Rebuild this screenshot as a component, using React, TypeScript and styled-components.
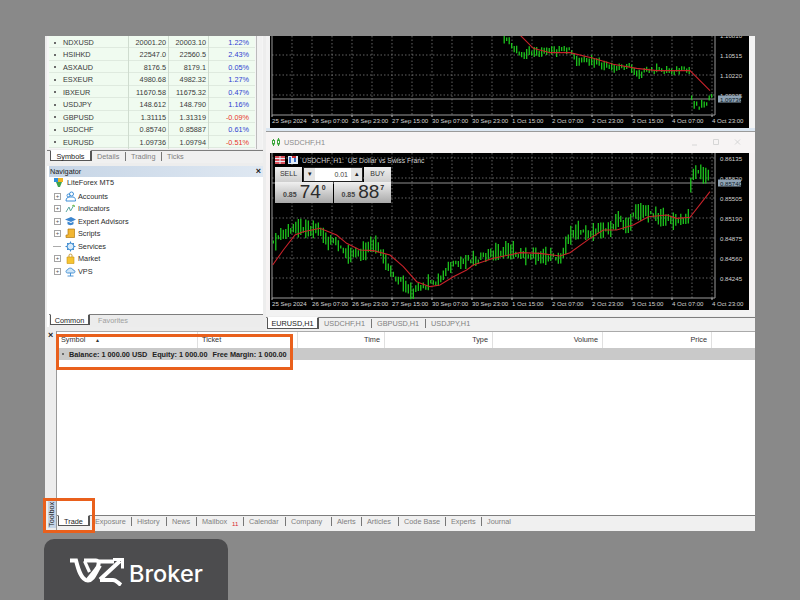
import React from "react";
import styled, { createGlobalStyle } from "styled-components";

const GlobalStyle = createGlobalStyle`
  html, body { margin: 0; padding: 0; background: #898989; }
  * { box-sizing: border-box; }
`;

type Pt = [number, number];

const marketRows = [
  { symbol: "NDXUSD", bid: "20001.20", ask: "20003.10", change: "1.22%" },
  { symbol: "HSIHKD", bid: "22547.0", ask: "22560.5", change: "2.43%" },
  { symbol: "ASXAUD", bid: "8176.5", ask: "8179.1", change: "0.05%" },
  { symbol: "ESXEUR", bid: "4980.68", ask: "4982.32", change: "1.27%" },
  { symbol: "IBXEUR", bid: "11670.58", ask: "11675.32", change: "0.47%" },
  { symbol: "USDJPY", bid: "148.612", ask: "148.790", change: "1.16%" },
  { symbol: "GBPUSD", bid: "1.31115", ask: "1.31319", change: "-0.09%" },
  { symbol: "USDCHF", bid: "0.85740", ask: "0.85887", change: "0.61%" },
  { symbol: "EURUSD", bid: "1.09736", ask: "1.09794", change: "-0.51%" },
];

const timeLabels = [
  "25 Sep 2024", "26 Sep 07:00", "26 Sep 23:00", "27 Sep 15:00", "30 Sep 07:00", "30 Sep 23:00",
  "1 Oct 15:00", "2 Oct 07:00", "2 Oct 23:00", "3 Oct 15:00", "4 Oct 07:00", "4 Oct 23:00",
];

// anchors are page coordinates read off the screenshot
const z3 = (x: number, y: number): Pt => [260 + x / 3, 130 + y / 3];
const z4 = (x: number, y: number): Pt => [520 + x / 3, 130 + y / 3];
const z5 = (x: number, y: number): Pt => [260 + x / 3, 30 + y / 3];

const lowerPrice: Pt[] = [
  z3(40, 335), z3(70, 310), z3(100, 300), z3(130, 295), z3(175, 300), z3(200, 335), z3(230, 340), z3(260, 375),
  z3(300, 375), z3(345, 340), z3(370, 385), z3(395, 430), z3(430, 460), z3(460, 485), z3(500, 465), z3(540, 450),
  z3(560, 415), z3(600, 400), z3(625, 385), z3(650, 390), z3(700, 370), z3(750, 360), z4(0, 375), z4(60, 375),
  z4(120, 385), z4(140, 340), z4(160, 305), z4(210, 310), z4(250, 295), z4(280, 295), z4(295, 260), z4(320, 290),
  z4(355, 240), z4(400, 255), z4(470, 275), z4(505, 262), z4(515, 125), z4(570, 135),
];
const lowerMa: Pt[] = [
  z3(38, 405), z3(70, 360), z3(105, 315), z3(130, 305), z3(180, 295), z3(230, 315), z3(260, 340), z3(300, 360),
  z3(340, 362), z3(390, 375), z3(430, 410), z3(470, 455), z3(510, 470), z3(540, 465), z3(580, 440), z3(620, 420),
  z3(640, 405), z3(700, 385), z3(780, 368), z4(60, 370), z4(120, 378), z4(150, 368), z4(210, 325), z4(250, 300),
  z4(290, 300), z4(340, 285), z4(385, 260), z4(440, 255), z4(470, 265), z4(510, 262), z4(570, 185),
];
const upperPrice: Pt[] = [
  z5(725, 12), z5(760, 50), z5(790, 85), z5(810, 65), z5(870, 67), z5(930, 60), z5(950, 95), z5(1000, 95),
  z5(1060, 118), z5(1100, 105), z5(1135, 130), z5(1180, 120), z5(1288, 122), z5(1296, 215), z5(1320, 228), z5(1355, 205),
];
const upperMa: Pt[] = [
  z5(780, 15), z5(820, 55), z5(870, 68), z5(930, 68), z5(1000, 85), z5(1060, 103), z5(1130, 115), z5(1190, 122),
  z5(1290, 122), z5(1350, 182),
];

const priceAt = (pts: Pt[], x: number) => {
  for (let i = 1; i < pts.length; i++) {
    if (x <= pts[i][0]) {
      const [x0, y0] = pts[i - 1];
      const [x1, y1] = pts[i];
      return y0 + ((y1 - y0) * (x - x0)) / (x1 - x0 || 1);
    }
  }
  return pts[pts.length - 1][1];
};

const jitter = (n: number) => {
  const v = Math.sin(n * 12.9898) * 43758.5453;
  return v - Math.floor(v);
};

const candlePath = (pts: Pt[], top: number, spread: number) => {
  let d = "";
  const endX = pts[pts.length - 1][0];
  for (let x = pts[0][0], i = 0; x <= endX; x += 2.5, i++) {
    const c = priceAt(pts, x);
    const h = 3 + jitter(i) * spread;
    const offset = (jitter(i + 40) - 0.5) * 5;
    const y0 = Math.max(top, c - h / 2 + offset);
    d += `M${x.toFixed(1)} ${y0.toFixed(1)}V${(c + h / 2 + offset).toFixed(1)}`;
  }
  return d;
};

interface ChartProps {
  top: number;
  height: number;
  plotBottom: number;
  priceLine: number;
  lastLabel: string;
  spread: number;
  levels: { y: number; label: string }[];
  price: Pt[];
  ma: Pt[];
}

const ChartDrawing: React.FC<ChartProps> = ({ top, height, plotBottom, priceLine, lastLabel, spread, levels, price, ma }) => {
  const gridX = Array.from({ length: 22 }, (_, i) => 292 + i * 20);
  const labelY = plotBottom + 8;
  return (
    <svg width="479" height={height} viewBox={`270 ${top} 479 ${height}`} style={{ display: "block" }}>
      <rect x="270" y={top} width="479" height={height} fill="#000" />
      <g stroke="#8d8d8d" strokeWidth="0.7" strokeDasharray="1.5 2">
        {gridX.map((x) => (
          <line key={x} x1={x} y1={top} x2={x} y2={plotBottom} />
        ))}
        {levels.map((l) => (
          <line key={l.y} x1="272" y1={l.y} x2="715" y2={l.y} />
        ))}
      </g>
      <path d={`M272 ${top}V${plotBottom}H715V${top}`} fill="none" stroke="#9b9b9b" strokeWidth="1" />
      <line x1="272" y1={priceLine} x2="715" y2={priceLine} stroke="#8f8f8f" strokeWidth="1" />
      <path d={candlePath(price, top, spread)} stroke="#1fd41f" strokeWidth="1.2" fill="none" />
      <polyline points={ma.map((p) => p.join(",")).join(" ")} fill="none" stroke="#c8222a" strokeWidth="1.1" />
      <g fill="#d4d4d4" fontFamily="'Liberation Sans', sans-serif" fontSize="6.1">
        {levels.map((l) => (
          <text key={l.label} x="720" y={l.y + 2.5}>{l.label}</text>
        ))}
        {timeLabels.map((t, i) => (
          <text key={t} x={272 + i * 40} y={labelY}>{t}</text>
        ))}
      </g>
      {timeLabels.map((t, i) => (
        <line key={t} x1={272 + i * 40} y1={plotBottom} x2={272 + i * 40} y2={plotBottom + 2} stroke="#bbb" />
      ))}
      <rect x="718" y={priceLine - 3.5} width="23" height="7" fill="#8fa3b5" />
      <text x="720" y={priceLine + 2.5} fill="#0c1a28" fontFamily="'Liberation Sans', sans-serif" fontSize="6.1">
        {lastLabel}
      </text>
    </svg>
  );
};

const toolboxTabs = [
  { label: "Exposure", width: 42 },
  { label: "History", width: 35 },
  { label: "News", width: 30 },
  { label: "Mailbox", width: 47, badge: "11" },
  { label: "Calendar", width: 42 },
  { label: "Company", width: 46 },
  { label: "Alerts", width: 30 },
  { label: "Articles", width: 37 },
  { label: "Code Base", width: 47 },
  { label: "Experts", width: 36 },
  { label: "Journal", width: 40 },
];

const navItems = [
  { label: "Accounts", kind: "accounts", expand: true },
  { label: "Indicators", kind: "indicators", expand: true },
  { label: "Expert Advisors", kind: "experts", expand: true },
  { label: "Scripts", kind: "scripts", expand: true },
  { label: "Services", kind: "services", expand: false },
  { label: "Market", kind: "market", expand: true },
  { label: "VPS", kind: "vps", expand: true },
];

const NavIcon: React.FC<{ kind: string }> = ({ kind }) => {
  const box = { width: 11, height: 11, viewBox: "0 0 11 11", style: { flex: "none" } as React.CSSProperties };
  switch (kind) {
    case "accounts":
      return (
        <svg {...box} fill="none" stroke="#3f8fd8" strokeWidth="1">
          <circle cx="6.5" cy="3" r="2" />
          <path d="M1 10c0-3 2-4 3-4h4c2 0 2.500 2 2.500 4z" />
          <circle cx="3.500" cy="4.500" r="1.500" />
        </svg>
      );
    case "indicators":
      return (
        <svg {...box} fill="none" strokeWidth="1">
          <path d="M1 9L4 4l1.500 4L9 2" stroke="#5aa7a0" />
          <path d="M7 3l2-1 .5 2" stroke="#7cc24f" />
        </svg>
      );
    case "experts":
      return (
        <svg {...box} fill="#3c86cf">
          <path d="M0 3.500L6 1l5 2.500L6 6z" />
          <path d="M2.500 5.500v2.500c1 1.500 5 1.500 6 0V5.500L6 7z" />
        </svg>
      );
    case "scripts":
      return (
        <svg {...box}>
          <path d="M3 1h6.500v8.500H1V7h2z" fill="#f2b632" stroke="#b27a12" strokeWidth="0.7" />
        </svg>
      );
    case "services":
      return (
        <svg {...box} fill="#d8ebfa" stroke="#3d8bd0" strokeWidth="1">
          <circle cx="5.500" cy="5.500" r="3.500" />
          <path d="M5.500 0.500v2M5.500 8.500v2M0.500 5.500h2M8.500 5.500h2M2 2l1.500 1.500M7.500 7.500L9 9M9 2L7.500 3.500M3.500 7.500L2 9" />
        </svg>
      );
    case "market":
      return (
        <svg {...box}>
          <path d="M2 4h7v6.500H2z" fill="#f6c431" stroke="#c99314" strokeWidth="0.6" />
          <path d="M4 4V2c0-1.200 3-1.200 3 0v2" fill="none" stroke="#b88712" strokeWidth="0.8" />
        </svg>
      );
    default:
      return (
        <svg {...box} fill="#cfe6f8" stroke="#3d8bd0" strokeWidth="0.9">
          <path d="M2.500 7C0.500 7 .5 4 2.500 4 3 1.500 7.500 1.500 8 4c2.500 0 2.500 3 .5 3z" />
          <path d="M5.500 7v3M2.500 10h6" fill="none" />
        </svg>
      );
  }
};

export default function App() {
  return (
    <Page>
      <GlobalStyle />
      <Terminal>
        <UpperArea>
          <LeftColumn>
            <MarketWatch>
              <MarketRows>
                {marketRows.map((row) => (
                  <MarketRow key={row.symbol}>
                    <SymbolCell>
                      <Dot />
                      {row.symbol}
                    </SymbolCell>
                    <PriceCell>{row.bid}</PriceCell>
                    <PriceCell>{row.ask}</PriceCell>
                    <ChangeCell $negative={row.change.startsWith("-")}>{row.change}</ChangeCell>
                  </MarketRow>
                ))}
              </MarketRows>
              <Scrollbar />
            </MarketWatch>
            <TabStrip $height={13} $pad={3}>
              <ActiveTab $width={42}>Symbols</ActiveTab>
              <PlainTab $width={34}>Details</PlainTab>
              <PlainTab $width={36}>Trading</PlainTab>
              <PlainTab $width={30} $last>Ticks</PlainTab>
            </TabStrip>
            <Navigator>
              <NavTitle>
                <span>Navigator</span>
                <CloseMark>×</CloseMark>
              </NavTitle>
              <Tree>
                <TreeRoot>
                  <svg width="11" height="11" viewBox="0 0 11 11">
                    <path d="M1 1h4v4H1z" fill="#2f8fdb" />
                    <path d="M5 1h5v4H5z" fill="#f0b323" />
                    <path d="M3 5h6l-2 5H5z" fill="#3fa34d" />
                  </svg>
                  LiteForex MT5
                </TreeRoot>
                {navItems.map((item) => (
                  <TreeRow key={item.label}>
                    {item.expand ? <Expander>+</Expander> : <TreeDash />}
                    <NavIcon kind={item.kind} />
                    <TreeLabel>{item.label}</TreeLabel>
                  </TreeRow>
                ))}
              </Tree>
              <NavTabs>
                <ActiveTab $width={40}>Common</ActiveTab>
                <FadedTab>Favorites</FadedTab>
              </NavTabs>
            </Navigator>
          </LeftColumn>
          <ChartColumn>
            <ChartPane>
              <ChartDrawing
                top={36}
                height={92}
                plotBottom={115}
                priceLine={99}
                lastLabel="1.09736"
                spread={7}
                levels={[
                  { y: 35, label: "1.10810" },
                  { y: 55, label: "1.10515" },
                  { y: 75, label: "1.10220" },
                  { y: 95, label: "1.09925" },
                ]}
                price={upperPrice}
                ma={upperMa}
              />
            </ChartPane>
            <PaneDivider />
            <ChartWindow>
              <ChartTitleBar>
                <svg width="8" height="9" viewBox="0 0 8 9" fill="none" stroke="#3ea63e" strokeWidth="1">
                  <path d="M1.500 1v7M6.500 0v8" />
                  <rect x="0.500" y="2.500" width="2" height="3.500" fill="#fff" />
                  <rect x="5.500" y="2" width="2" height="4" fill="#fff" />
                </svg>
                <ChartTitleText>USDCHF,H1</ChartTitleText>
                <WindowButtons>
                  <svg width="60" height="9" viewBox="0 0 60 9" fill="none" stroke="#d6d6d6">
                    <path d="M6 7h5M27.500 1.500h5v5h-5zM49 1.500l5 5M54 1.500l-5 5" />
                  </svg>
                </WindowButtons>
              </ChartTitleBar>
              <ChartHolder>
                <ChartDrawing
                  top={153}
                  height={157}
                  plotBottom={298}
                  priceLine={183}
                  lastLabel="0.85740"
                  spread={16}
                  levels={[
                    { y: 158, label: "0.86135" },
                    { y: 178, label: "0.85820" },
                    { y: 198, label: "0.85505" },
                    { y: 218, label: "0.85190" },
                    { y: 238, label: "0.84875" },
                    { y: 258, label: "0.84560" },
                    { y: 278, label: "0.84245" },
                  ]}
                  price={lowerPrice}
                  ma={lowerMa}
                />
                <ChartCaption>
                  <svg width="24" height="8" viewBox="0 0 24 8">
                    <rect x="0" y="0" width="10" height="8" fill="#d9505a" />
                    <path d="M0 2.500h10M0 5.500h10M5 0v8" stroke="#e6e9f5" strokeWidth="1" />
                    <rect x="13" y="0" width="10" height="8" fill="#e4edf7" />
                    <path d="M15 1v6M20 1v5" stroke="#3d70c8" strokeWidth="2" />
                    <path d="M17 0h4v2h-4z" fill="#cc2c36" />
                  </svg>
                  <span>USDCHF, H1:&nbsp; US Dollar vs Swiss Franc</span>
                </ChartCaption>
                <TradePanel>
                  <TradeTop>
                    <TradeButton>SELL</TradeButton>
                    <Stepper>
                      <StepArrow>▾</StepArrow>
                      <StepValue>0.01</StepValue>
                      <StepArrow>▴</StepArrow>
                    </Stepper>
                    <TradeButton>BUY</TradeButton>
                  </TradeTop>
                  <QuoteRow>
                    <Quote>
                      <QuoteSmall>0.85</QuoteSmall>
                      <QuoteBig>74</QuoteBig>
                      <QuoteSup>0</QuoteSup>
                    </Quote>
                    <Quote>
                      <QuoteSmall>0.85</QuoteSmall>
                      <QuoteBig>88</QuoteBig>
                      <QuoteSup>7</QuoteSup>
                    </Quote>
                  </QuoteRow>
                </TradePanel>
              </ChartHolder>
              <ChartFooter />
            </ChartWindow>
            <TabStrip $height={14} $pad={1}>
              <ActiveTab $width={52}>EURUSD,H1</ActiveTab>
              <PlainTab $width={53}>USDCHF,H1</PlainTab>
              <PlainTab $width={54}>GBPUSD,H1</PlainTab>
              <PlainTab $width={50} $last>USDJPY,H1</PlainTab>
            </TabStrip>
          </ChartColumn>
        </UpperArea>
        <Toolbox>
          <ToolboxRail>
            <CloseMark>×</CloseMark>
            <RailLabel>Toolbox</RailLabel>
          </ToolboxRail>
          <ToolboxBody>
            <ToolboxHeader>
              <HeadCell $width={141}>Symbol <SortMark>▴</SortMark></HeadCell>
              <HeadCell $width={100}>Ticket</HeadCell>
              <HeadCell $width={87}>Time</HeadCell>
              <HeadCell $width={108}>Type</HeadCell>
              <HeadCell $width={110}>Volume</HeadCell>
              <HeadCell $width={109}>Price</HeadCell>
            </ToolboxHeader>
            <BalanceRow>
              <Dot />
              <span>Balance: 1 000.00 USD</span>
              <span>Equity: 1 000.00</span>
              <span>Free Margin: 1 000.00</span>
            </BalanceRow>
            <EmptyArea />
            <ToolboxTabs>
              <ActiveTab $width={32}>Trade</ActiveTab>
              {toolboxTabs.map((tab, i) => (
                <PlainTab key={tab.label} $width={tab.width} $last={i === toolboxTabs.length - 1}>
                  {tab.label}
                  {tab.badge && <MailBadge>{tab.badge}</MailBadge>}
                </PlainTab>
              ))}
            </ToolboxTabs>
          </ToolboxBody>
        </Toolbox>
        <HighlightTable />
        <HighlightTab />
      </Terminal>
      <BrokerBadge>
        <svg width="54" height="28" viewBox="0 0 54 28" fill="none" stroke="#fff" strokeWidth="4">
          <path d="M0 2.500h6c2 8 5 20 12 20 5 0 7-7 12-15" />
          <path d="M14 2.500h12c4 0 3 6 0 9l-8 10" />
          <path d="M14.500 3l5 11" strokeWidth="3.200" />
          <path d="M29 3.500h15M30 21.500L50 3M30 22h13c3 0 5 3 8 5" />
          <path d="M43 1.500h9.500v9" strokeWidth="3" />
        </svg>
        <BrokerName>Broker</BrokerName>
      </BrokerBadge>
    </Page>
  );
}

const uiFont = `"Liberation Sans", Arial, sans-serif`;

const Page = styled.div`
  position: relative;
  width: 800px;
  height: 600px;
  padding: 36px 0 0 45px;
  overflow: hidden;
  background: #898989;
  font-family: ${uiFont};
  font-size: 7.3px;
  color: #3a3a3a;
`;

const Terminal = styled.div`
  position: relative;
  width: 710px;
  height: 495px;
  padding-left: 2px;
  display: flex;
  flex-direction: column;
  background: #ededed;
`;

const UpperArea = styled.div`
  display: flex;
  height: 295px;
  gap: 3px;
`;

const LeftColumn = styled.div`
  width: 216px;
  display: flex;
  flex-direction: column;
`;

const MarketWatch = styled.div`
  display: flex;
  height: 113px;
  padding-left: 2px;
  background: #f5f5f5;
`;

const MarketRows = styled.div`
  width: 206px;
`;

const Scrollbar = styled.div`
  width: 6px;
  margin-left: 1px;
  border-left: 1px solid #bbb;
  background: #f2f2f2;
`;

const MarketRow = styled.div`
  display: grid;
  grid-template-columns: 80px 40px 40px 44px;
  height: 12.44px;
  background: #f0fbf0;
  border-bottom: 1px solid #dfeadf;
  line-height: 13px;
`;

const SymbolCell = styled.div`
  display: flex;
  align-items: center;
  gap: 7px;
  padding-left: 5px;
  border-right: 1px solid #cfdccf;
`;

const Dot = styled.span`
  width: 2px;
  height: 2px;
  background: #6b6b6b;
  flex: none;
`;

const PriceCell = styled.div`
  padding-right: 2px;
  text-align: right;
  border-right: 1px solid #cfdccf;
`;

const ChangeCell = styled.div<{ $negative: boolean }>`
  padding-right: 4px;
  text-align: right;
  color: ${(p) => (p.$negative ? "#e8342c" : "#2f3fd0")};
`;

const TabStrip = styled.div<{ $height: number; $pad: number }>`
  display: flex;
  flex: none;
  height: ${(p) => p.$height}px;
  padding-left: ${(p) => p.$pad}px;
  border-top: 1px solid #7d7d7d;
  margin-top: 1px;
  background: #f0f0f0;
`;

const NavTabs = styled.div`
  display: flex;
  flex: none;
  height: 13px;
  padding-left: 1px;
  border-top: 1px solid #7d7d7d;
  background: #ececec;
`;

const ToolboxTabs = styled.div`
  display: flex;
  flex: none;
  height: 13px;
  margin-bottom: 3px;
  padding-left: 1px;
  border-top: 1px solid #7d7d7d;
  background: #f0f0f0;
`;

const ActiveTab = styled.div<{ $width: number }>`
  width: ${(p) => p.$width}px;
  height: calc(100% - 1px);
  margin-top: -1px;
  text-align: center;
  line-height: 11px;
  color: #222;
  background: #fff;
  border: 1px solid #555;
  border-top-color: #fff;
  border-right-width: 2px;
`;

const PlainTab = styled.div<{ $width: number; $last?: boolean }>`
  position: relative;
  width: ${(p) => p.$width}px;
  height: 9px;
  margin-top: 1px;
  padding-left: 5px;
  line-height: 9px;
  white-space: nowrap;
  color: #808080;
  border-right: ${(p) => (p.$last ? "none" : "1px solid #777")};
`;

const FadedTab = styled.div`
  padding-left: 8px;
  line-height: 11px;
  color: #a0a0a0;
`;

const MailBadge = styled.span`
  position: absolute;
  top: 3px;
  left: 35px;
  font-size: 6px;
  color: #d8262c;
`;

const Navigator = styled.div`
  display: flex;
  flex-direction: column;
  flex: 1;
  margin: 3px 0 4px;
  padding-left: 2px;
  background: #fff;
`;

const NavTitle = styled.div`
  display: flex;
  justify-content: space-between;
  align-items: center;
  height: 11px;
  padding: 0 2px 0 1px;
  color: #222;
  background: linear-gradient(to right, #c6d5e6, #dfe8f2);
`;

const CloseMark = styled.span`
  font-weight: 700;
  font-size: 9px;
  line-height: 9px;
  color: #222;
`;

const Tree = styled.div`
  flex: 1;
  padding: 0 0 0 4px;
  color: #2c2c2c;
`;

const TreeRoot = styled.div`
  display: flex;
  align-items: center;
  gap: 3px;
  height: 11px;
  margin-bottom: 2px;
`;

const TreeRow = styled.div`
  display: flex;
  align-items: center;
  height: 12.500px;
`;

const Expander = styled.span`
  width: 7px;
  height: 7px;
  margin: 0 4px 0 1px;
  flex: none;
  border: 1px solid #a4a4a4;
  font-size: 6px;
  line-height: 5px;
  text-align: center;
  color: #555;
`;

const TreeDash = styled.span`
  width: 8px;
  height: 1px;
  margin: 0 4px 0 0;
  flex: none;
  background: #aaa;
`;

const TreeLabel = styled.span`
  margin-left: 2px;
`;

const ChartColumn = styled.div`
  flex: 1;
  display: flex;
  flex-direction: column;
  min-width: 0;
`;

const ChartPane = styled.div`
  height: 92px;
  padding-left: 4px;
  background: #f3f3f3;
`;

const PaneDivider = styled.div`
  height: 4px;
  background: #dbe6f1;
  border-bottom: 1px solid #9a9a9a;
`;

const ChartWindow = styled.div`
  flex: 1;
  display: flex;
  flex-direction: column;
  background: #f6f3f3;
`;

const ChartTitleBar = styled.div`
  display: flex;
  align-items: center;
  gap: 4px;
  height: 21px;
  padding: 0 9px 0 6px;
  background: #f7f4f4;
`;

const ChartTitleText = styled.span`
  font-size: 7.3px;
  color: #8b8b8b;
`;

const WindowButtons = styled.div`
  margin-left: auto;
  line-height: 0;
`;

const ChartHolder = styled.div`
  position: relative;
  margin-left: 4px;
  width: 479px;
  height: 157px;
`;

const ChartCaption = styled.div`
  position: absolute;
  top: 3px;
  left: 5px;
  display: flex;
  align-items: center;
  gap: 3px;
  font-size: 6.800px;
  color: #d2d2d2;
`;

const TradePanel = styled.div`
  position: absolute;
  top: 14px;
  left: 5px;
  width: 116px;
`;

const TradeTop = styled.div`
  display: flex;
  height: 15px;
`;

const TradeButton = styled.div`
  width: 27px;
  text-align: center;
  font-size: 7px;
  line-height: 14px;
  color: #333;
  background: linear-gradient(#efefef, #cfcfcf);
`;

const Stepper = styled.div`
  display: flex;
  width: 60px;
  margin: 0 1px;
  background: #fff;
  border: 1px solid #222;
`;

const StepArrow = styled.div`
  width: 11px;
  text-align: center;
  font-size: 7px;
  line-height: 12px;
  color: #222;
  background: #e5e5e5;
`;

const StepValue = styled.div`
  flex: 1;
  padding-right: 3px;
  text-align: right;
  font-size: 7px;
  line-height: 13px;
  color: #444;
`;

const QuoteRow = styled.div`
  display: flex;
  gap: 1px;
  height: 21px;
`;

const Quote = styled.div`
  flex: 1;
  display: flex;
  align-items: flex-start;
  padding-left: 8px;
  background: linear-gradient(#f0f0f0, #a9a9a9);
  color: #2b2b2b;
`;

const QuoteSmall = styled.span`
  margin-top: 9px;
  font-size: 7px;
  font-weight: 700;
  color: #444;
`;

const QuoteBig = styled.span`
  margin-left: 3px;
  font-size: 19px;
  line-height: 20px;
`;

const QuoteSup = styled.span`
  margin: 2px 0 0 1px;
  font-size: 7px;
  font-weight: 700;
`;

const ChartFooter = styled.div`
  flex: 1;
  background: #f2f2f2;
`;

const Toolbox = styled.div`
  flex: 1;
  display: flex;
  min-height: 0;
`;

const ToolboxRail = styled.div`
  position: relative;
  width: 10px;
  padding-left: 1px;
  background: #ededed;
  border-right: 1px solid #9a9a9a;
`;

const RailLabel = styled.div`
  position: absolute;
  left: 1px;
  bottom: 3px;
  height: 27px;
  width: 8px;
  writing-mode: vertical-rl;
  transform: rotate(180deg);
  text-align: center;
  line-height: 8px;
  color: #222;
  background: #c6d5e6;
`;

const ToolboxBody = styled.div`
  flex: 1;
  display: flex;
  flex-direction: column;
  min-width: 0;
  background: #f0f0f0;
`;

const ToolboxHeader = styled.div`
  display: flex;
  height: 17px;
  align-items: center;
  background: #fff;
  border-top: 1px solid #aaa;
`;

const HeadCell = styled.div<{ $width: number }>`
  flex: none;
  width: ${(p) => p.$width}px;
  height: 100%;
  padding-left: 4px;
  line-height: 16px;
  color: #333;
  border-right: 1px solid #e0e0e0;
  &:nth-child(n + 3) {
    padding: 0 4px 0 0;
    text-align: right;
  }
`;

const SortMark = styled.span`
  margin-left: 9px;
  font-size: 6px;
`;

const BalanceRow = styled.div`
  display: flex;
  align-items: center;
  gap: 5px;
  height: 12px;
  padding-left: 5px;
  font-weight: 700;
  color: #222;
  background: #c9c9c9;
`;

const EmptyArea = styled.div`
  flex: 1;
  background: #fff;
`;

const HighlightTable = styled.div`
  position: absolute;
  left: 11px;
  top: 298px;
  width: 237px;
  height: 36px;
  border: 3px solid #e9601c;
`;

const HighlightTab = styled.div`
  position: absolute;
  left: -2px;
  top: 462px;
  width: 52px;
  height: 35px;
  border: 3px solid #e9601c;
`;

const BrokerBadge = styled.div`
  display: flex;
  align-items: center;
  gap: 5px;
  width: 184px;
  height: 61px;
  margin: 8px 0 0 -1px;
  padding: 4px 0 0 26px;
  border-radius: 10px 10px 0 0;
  background: #4c4c4e;
`;

const BrokerName = styled.span`
  margin-top: 3px;
  font-family: Inter, sans-serif;
  font-size: 23.500px;
  font-weight: 500;
  color: #fff;
`;
